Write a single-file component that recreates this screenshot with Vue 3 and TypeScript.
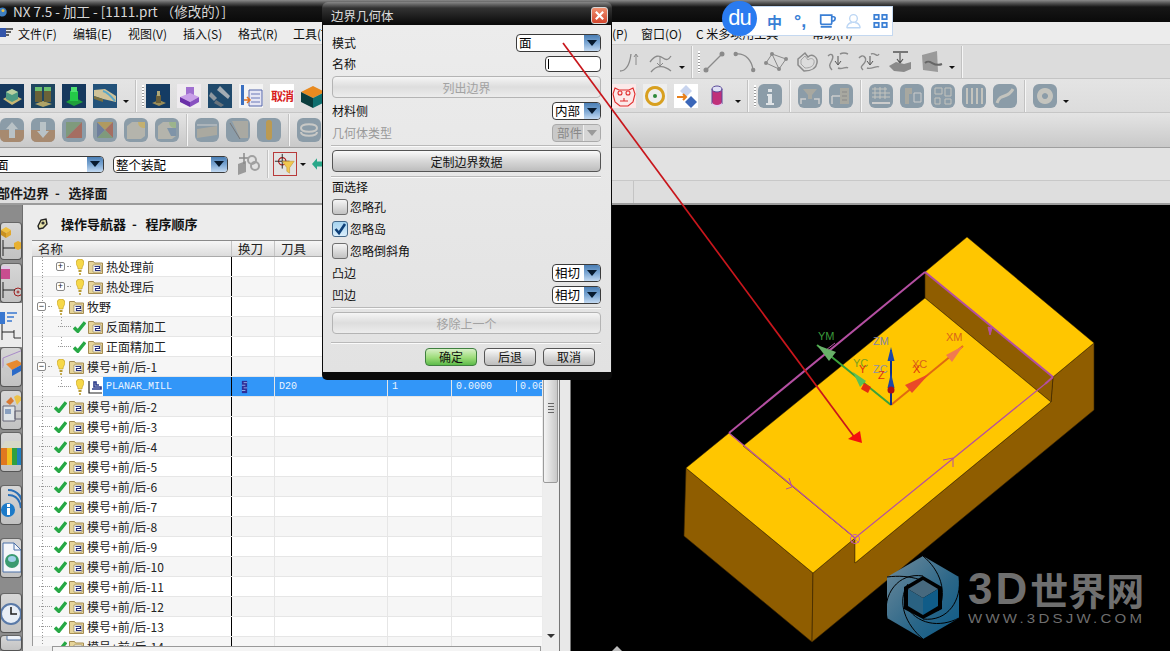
<template>
  <div class="app">
    <div class="title-bar">
      <svg class="orb" viewBox="0 0 12 16"><circle cx="3" cy="8" r="6" fill="#3f7fc0" /><circle cx="4" cy="6" r="2" fill="#e8c04a" /></svg>
      <span>NX 7.5 - 加工 - [1111.prt （修改的）]</span>
    </div>

    <div class="menu-bar">
      <svg class="menu-icon" viewBox="0 0 14 14"><path d="M0 2h6v9H0z" fill="#3355aa" /><path d="M6 3h7M6 6h5M6 9h3" stroke="#333" stroke-width="1.4" /></svg>
      <span v-for="m in menusLeft" :key="m" class="menu-item">{{ m }}</span>
      <span class="menu-rest">
        <span class="menu-tight">(P)</span>
        <span class="menu-item">窗口(O)</span>
        <span class="menu-long">C 米多项用工具</span>
        <span class="menu-item">帮助(H)</span>
      </span>
    </div>

    <div class="tb tb1">
      <div class="tb-group tb1-group">
        <template v-for="(it, i) in row1" :key="i">
          <span v-if="it === 'sep'" class="tb-sep" />
          <span v-else-if="it === 'grip'" class="tb-grip" />
          <span v-else-if="it === 'drop'" class="tb-drop" />
          <svg v-else class="tb-icon" viewBox="0 0 24 24">
            <rect v-if="icons[it].bg" width="24" height="24" :rx="icons[it].rx ?? 0" :fill="icons[it].bg" />
            <path v-for="(s, j) in icons[it].shapes" :key="j" :d="s.d" :fill="s.fill ?? 'none'" :stroke="s.stroke ?? 'none'" :stroke-width="s.w ?? 1" />
          </svg>
        </template>
      </div>
    </div>

    <div class="tb tb2">
      <template v-for="(it, i) in row2" :key="i">
        <span v-if="it === 'sep'" class="tb-sep" />
        <span v-else-if="it === 'grip'" class="tb-grip" />
        <span v-else-if="it === 'drop'" class="tb-drop" />
        <span v-else-if="it === 'jump'" class="tb-jump" />
        <span v-else-if="it === 'cancel'" class="tb-cancel">取消</span>
        <svg v-else class="tb-icon" viewBox="0 0 24 24">
          <rect v-if="icons[it].bg" width="24" height="24" :rx="icons[it].rx ?? 0" :fill="icons[it].bg" />
          <path v-for="(s, j) in icons[it].shapes" :key="j" :d="s.d" :fill="s.fill ?? 'none'" :stroke="s.stroke ?? 'none'" :stroke-width="s.w ?? 1" />
        </svg>
      </template>
    </div>

    <div class="tb tb3">
      <template v-for="(it, i) in row3" :key="i">
        <span v-if="it === 'sep'" class="tb-sep" />
        <svg v-else class="tb-icon" viewBox="0 0 24 24">
          <rect v-if="icons[it].bg" width="24" height="24" :rx="icons[it].rx ?? 0" :fill="icons[it].bg" />
          <path v-for="(s, j) in icons[it].shapes" :key="j" :d="s.d" :fill="s.fill ?? 'none'" :stroke="s.stroke ?? 'none'" :stroke-width="s.w ?? 1" />
        </svg>
      </template>
    </div>

    <div class="tb tb4">
      <div class="combo combo-face"><span class="combo-text">面</span><span class="combo-arrow"><i /></span></div>
      <div class="combo combo-scope"><span class="combo-text">整个装配</span><span class="combo-arrow"><i /></span></div>
      <svg class="assy-icon" viewBox="0 0 24 24">
        <path d="M2 12l8-3v11l-8 3z" fill="#9a9a9a" />
        <path d="M8 1v11M3 6h10" stroke="#8a8a8a" stroke-width="1.5" />
        <circle cx="16" cy="8" r="4" fill="none" stroke="#a0a0a0" stroke-width="2" />
        <circle cx="19" cy="14" r="4" fill="none" stroke="#a0a0a0" stroke-width="2" />
      </svg>
      <span class="tb-sep tb4-sep" />
      <div class="filter-btn">
        <svg viewBox="0 0 24 24">
          <circle cx="9" cy="9" r="4" fill="none" stroke="#b01818" stroke-width="1.2" />
          <path d="M9 1v16M1 9h16" stroke="#222" stroke-width="1" />
          <path d="M9 9h13l-5 7v6l-3-2v-4z" fill="#f0c850" stroke="#c09030" stroke-width=".6" />
        </svg>
      </div>
      <span class="tb-drop tb4-drop" />
      <svg class="green-arrow" viewBox="0 0 12 14"><path d="M0 7l6-7v4h6v6H6v4z" fill="#2aa88a" /></svg>
    </div>

    <div class="status-row">
      <span class="status-text">{{ statusText }}</span>
      <span class="status-tick" />
    </div>

    <div class="main">
      <div class="rail">
        <div v-for="(b, i) in rail" :key="i" :class="['rail-item', b.kind]" :style="{ height: b.h + 'px' }">
          <svg v-if="b.shapes" viewBox="0 0 22 38" class="rail-icon">
            <path v-for="(s, j) in b.shapes" :key="j" :d="s.d" :fill="s.fill ?? 'none'" :stroke="s.stroke ?? 'none'" :stroke-width="s.w ?? 1" />
          </svg>
        </div>
      </div>

      <div class="nav">
        <div class="nav-head">
          <svg class="nav-icon" viewBox="0 0 12 12"><path d="M2 8l3-6 5-1 1 5-4 4-4 1z" fill="#e8e2a8" stroke="#222" stroke-width="1.4" /><circle cx="7" cy="5" r="1.6" fill="#333" /></svg>
          <span class="nav-title">{{ navTitle }}</span>
        </div>
        <div class="grid-wrap">
          <div class="grid">
            <div class="grid-head">
              <span>名称</span><span>换刀</span><span>刀具</span><span /><span />
            </div>
            <div class="grid-body">
              <div v-for="(r, i) in rows" :key="i" :class="['grid-row', { odd: i % 2 === 1, selected: r.selected }]">
                <div :class="['name-cell', 'lv' + r.level, { sub: r.sub }]">
                  <span class="slot">
                    <span v-if="r.expand" class="expander">{{ r.expand }}</span>
                    <span class="dots" />
                  </span>
                  <span class="state">
                    <svg v-if="r.state === 'bulb'" class="bulb" viewBox="0 0 8 16"><path d="M4 0a4 4 0 0 1 4 4c0 2-2 3-2 6H2c0-3-2-4-2-6a4 4 0 0 1 4-4z" fill="#f6d84a" stroke="#c09a20" stroke-width=".6" /><path d="M2.5 11h3v2h-3zM3.2 14h1.6v2H3.2z" fill="#b89a30" /></svg>
                    <svg v-else class="check" viewBox="0 0 13 12"><path d="M1 6.5l3.8 3.8L12 1.2" fill="none" stroke="#27a845" stroke-width="3.4" /></svg>
                  </span>
                  <svg v-if="r.op" class="folder" viewBox="0 0 15 14"><path d="M1 1v12h13" fill="none" stroke="#222" stroke-width="1.2" /><path d="M4 9h9V7H6V2h2v3h3" fill="none" stroke="#2a3a8a" stroke-width="1.6" /></svg>
                  <svg v-else class="folder" viewBox="0 0 15 14">
                    <path d="M.5 1.5h5l1 1.5h8v10.5H.5z" fill="#e6d49a" stroke="#a58c52" />
                    <path d="M5 5h8v7H5z" fill="#fff" stroke="#8a7a50" stroke-width=".6" />
                    <path d="M6.5 6.5h5v2h-4v2h5" fill="none" stroke="#27307a" stroke-width="1.2" />
                  </svg>
                  <span :class="['name-text', { mono: r.selected }]">{{ r.name }}</span>
                </div>
                <div class="cell tool-change">
                  <svg v-if="r.selected" viewBox="0 0 8 14" class="tool-icon"><path d="M1 0h6v14H1z" fill="#2e2e98" /><path d="M3 2h4M1 5h4M3 8h4M1 11h4" stroke="#9ab8f0" /></svg>
                </div>
                <div class="cell">{{ r.selected ? 'D20' : '' }}</div>
                <div class="cell">{{ r.selected ? '1' : '' }}</div>
                <div class="cell last">
                  <span v-if="r.selected">0.0000</span><span v-if="r.selected" class="extra">0.000</span>
                </div>
              </div>
            </div>
          </div>
          <div class="vscroll">
            <div class="vthumb"><i /><i /><i /><i /></div>
            <span class="varrow" />
          </div>
        </div>
        <div class="hscroll"><span class="hthumb" /></div>
      </div>

      <div class="gutter" />

      <div class="graphics">
        <svg class="scene" viewBox="571 205 599 446">
          <path d="M686 468L813 573L812 642L684 536Z" fill="#8f5d00" stroke="#3a2500" stroke-width=".6" />
          <path d="M813 573L855 538V563L1051 402L1053 377L1094 343V410L812 642Z" fill="#8f5d00" stroke="#3a2500" stroke-width=".6" />
          <path d="M925 272L1053 377L1051 402L925 298Z" fill="#8f5d00" stroke="#3a2500" stroke-width=".6" />
          <path d="M686 468L729 433L855 538L813 573Z" fill="#ffc600" stroke="#3a2500" stroke-width=".5" />
          <path d="M743 446L925 298L1051 402L855 563V538Z" fill="#ffc600" stroke="#3a2500" stroke-width=".5" />
          <path d="M925 272L967 237L1094 343L1053 377Z" fill="#ffc600" stroke="#3a2500" stroke-width=".5" />

          <path d="M729 433L925 272" stroke="#b44fa2" stroke-width="2" />
          <path d="M925 272L1053 377" stroke="#b44fa2" stroke-width="2" />
          <path d="M1053 377L1045 384" stroke="#b44fa2" stroke-width="2" />
          <path d="M1045 384L855 538L729 433" fill="none" stroke="#b44fa2" stroke-width="1.2" />
          <circle cx="855" cy="539" r="4.5" fill="none" stroke="#c05ab0" />
          <path d="M851 535l8 8M859 535l-8 8" stroke="#c05ab0" stroke-width=".7" />
          <path d="M943 460L953 458L953 467" fill="none" stroke="#b44fa2" />
          <path d="M789 478L792 487L786 489" fill="none" stroke="#b44fa2" />
          <path d="M988 327l2 8 2-7z" fill="#b44fa2" stroke="#b44fa2" />
          <path d="M835 343L826 350L833 356" fill="none" stroke="#b44fa2" />

          <path d="M891 405L817 345" stroke="#3aa23a" stroke-width="2" />
          <path d="M817 345L836 352L829 361Z" fill="#68b068" />
          <path d="M853 372L866 381L860 387Z" fill="#58c058" />
          <path d="M891 405L963 346" stroke="#e06a10" stroke-width="2" />
          <path d="M963 346L952 362L946 355Z" fill="#f07a50" />
          <path d="M929 374L912 393L905 385Z" fill="#ea4a28" />
          <path d="M891 405V350" stroke="#10308a" stroke-width="2" />
          <path d="M891 347l-3.5 14h7z" fill="#1c48a8" />
          <path d="M891 373l-3.5 15h7z" fill="#1c48a8" />
          <circle cx="891" cy="390" r="3.5" fill="#b01010" />
          <path d="M864 383L871 387L868 393L861 389Z" fill="#e52a10" />
          <text x="818" y="340" class="axis" fill="#3b9a3b">YM</text>
          <text x="873" y="345" class="axis" fill="#7f84a8">ZM</text>
          <text x="946" y="341" class="axis" fill="#d8641c">XM</text>
          <text x="853" y="367" class="axis" fill="#7aa020">YC</text>
          <text x="873" y="373" class="axis" fill="#8f90a0">ZC</text>
          <text x="912" y="368" class="axis" fill="#d8641c">XC</text>
          <text x="859" y="373" class="axis" fill="#dd3010">Y</text>
          <text x="878" y="379" class="axis" fill="#dd3010">Z</text>
          <text x="913" y="373" class="axis" fill="#dd3010">X</text>

          <path d="M923 556L959 577V618L923 639L887 618V577Z" fill="url(#hexFill)" />
          <path d="M887 577C910 574 932 580 942 597M923 556C940 570 948 592 938 611M959 577C962 600 948 622 923 619M959 618C940 628 916 625 905 604M923 639C906 625 896 602 908 584M887 618C882 595 898 572 923 576" fill="none" stroke="#000" stroke-width="1" />
          <path d="M923 576L942 587V609L923 619L904 609V587Z" fill="#000" />
          <path d="M923 580L938 589L923 598L908 589Z" fill="#47697e" />
          <path d="M908 589L923 598V615L908 606Z" fill="#2a6282" />
          <path d="M938 589L923 598V615L938 606Z" fill="#105c88" />
          <path d="M612 651l5-5 5 5z" fill="#bbb" />
          <defs>
            <linearGradient id="hexFill" x1="0" y1="0" x2="1" y2="1">
              <stop offset="0" stop-color="#6f8b9c" />
              <stop offset=".6" stop-color="#2a6688" />
              <stop offset="1" stop-color="#0b5a88" />
            </linearGradient>
          </defs>
        </svg>
        <div class="mark">
          <div class="mark-big"><span class="mark-en">3D</span><span class="mark-cn">世界网</span></div>
          <div class="mark-url">WWW.3DSJW.COM</div>
        </div>
      </div>
    </div>

    <div class="dialog">
      <div class="dlg-title">
        <span>边界几何体</span>
        <button class="close"><svg viewBox="0 0 12 12"><path d="M2 2l8 8M10 2l-8 8" stroke="#fff" stroke-width="2.4" /></svg></button>
      </div>
      <div class="dlg-body">
        <div class="dlg-row">
          <label>模式</label>
          <div class="combo dlg-mode"><span class="combo-text">面</span><span class="combo-arrow"><i /></span></div>
        </div>
        <div class="dlg-row mt4 name-row">
          <label>名称</label>
          <div class="name-input"><i /></div>
        </div>
        <button class="btn btn-wide mt4" disabled>列出边界</button>
        <div class="dlg-row mt4">
          <label>材料侧</label>
          <div class="combo dlg-small"><span class="combo-text">内部</span><span class="combo-arrow"><i /></span></div>
        </div>
        <div class="dlg-row mt4 off">
          <label>几何体类型</label>
          <div class="combo dlg-small disabled"><span class="combo-text">部件</span><span class="combo-arrow"><i /></span></div>
        </div>
        <div class="dlg-sep mt3" />
        <button class="btn btn-wide mt3">定制边界数据</button>
        <div class="dlg-sep mt4" />
        <div class="dlg-row group-label"><label>面选择</label></div>
        <label v-for="(c, i) in checks" :key="c.text" :class="['chk', i === 0 ? 'mt3' : 'mt6']">
          <span :class="['box', { on: c.on }]">
            <svg v-if="c.on" viewBox="0 0 14 14"><path d="M2.5 7l3.5 4 6-9" fill="none" stroke="#0d3f78" stroke-width="2.6" /></svg>
          </span>
          <span>{{ c.text }}</span>
        </label>
        <div class="dlg-row mt5">
          <label>凸边</label>
          <div class="combo dlg-small"><span class="combo-text">相切</span><span class="combo-arrow"><i /></span></div>
        </div>
        <div class="dlg-row mt4">
          <label>凹边</label>
          <div class="combo dlg-small"><span class="combo-text">相切</span><span class="combo-arrow"><i /></span></div>
        </div>
        <div class="dlg-sep mt3" />
        <button class="btn btn-wide mt3" disabled>移除上一个</button>
        <div class="dlg-sep mt8" />
        <div class="dlg-foot">
          <button class="btn foot ok">确定</button>
          <button class="btn foot">后退</button>
          <button class="btn foot">取消</button>
        </div>
      </div>
    </div>

    <svg class="red-arrow" viewBox="0 0 1170 651">
      <path d="M563 43L855 438" stroke="#c8161c" stroke-width="1.7" />
      <path d="M862 443L848 439L860 431Z" fill="#f40f0f" />
    </svg>

    <div class="ime">
      <div class="ime-logo">du</div>
      <span class="ime-zh">中</span>
      <span class="ime-punct">°,</span>
      <svg class="ime-ic" viewBox="0 0 20 18"><path d="M2 2h13v9q0 2-2 2H4q-2 0-2-2zM15 4h2q2 0 2 2t-2 3h-2M2 16h13" fill="none" stroke="#3a7fd5" stroke-width="2" /></svg>
      <svg class="ime-ic" viewBox="0 0 20 18"><circle cx="10" cy="6" r="4.5" fill="none" stroke="#bcd6f4" stroke-width="1.6" /><path d="M2 17c1-5 4-6 6-6M18 17c-1-5-4-6-6-6M2 17h16" fill="none" stroke="#bcd6f4" stroke-width="1.6" /></svg>
      <svg class="ime-ic ime-grid" viewBox="0 0 18 18"><path d="M2 2h5v5H2zM11 2h5v5h-5zM2 11h5v5H2zM11 11h5v5h-5z" fill="none" stroke="#3a7fd5" stroke-width="2" /></svg>
    </div>
  </div>
</template>

<script setup lang="ts">
interface Shape {
  d: string
  fill?: string
  stroke?: string
  w?: number
}
interface Icon {
  bg?: string
  rx?: number
  shapes: Shape[]
}
interface Row {
  name: string
  level: 0 | 1
  state: 'bulb' | 'check'
  expand?: string
  op?: boolean
  sub?: boolean
  selected?: boolean
}

const menusLeft = ['文件(F)', '编辑(E)', '视图(V)', '插入(S)', '格式(R)', '工具(T)']
const statusText = '部件边界  -   选择面'
const navTitle = '操作导航器  -   程序顺序'

const line = '#8a8a8a'
const dark = '#16395e'
const grey = '#8b9ca8'

const icons: Record<string, Icon> = {
  // drawing tools, first row
  curveA: { shapes: [{ d: 'M2 21C10 21 12 12 13 4', stroke: line, w: 1.3 }, { d: 'M18 5v10M16 7l2-3 2 3', stroke: line }] },
  curveB: { shapes: [{ d: 'M1 12C6 5 10 5 14 8s6 1 8-2M2 22C8 14 16 16 22 21', stroke: line, w: 1.3 }, { d: 'M11 7v8M8 13l3 3 3-3', stroke: line }] },
  lineT: { shapes: [{ d: 'M4 20L20 4', stroke: line, w: 1.3 }, { d: 'M1.5 20a2.5 2.5 0 1 0 5 0a2.5 2.5 0 1 0-5 0M17.5 4a2.5 2.5 0 1 0 5 0a2.5 2.5 0 1 0-5 0', fill: line }] },
  arcT: { shapes: [{ d: 'M3 4C13 3 19 11 20 20', stroke: line, w: 1.3 }, { d: 'M.5 4a2.2 2.2 0 1 0 4.4 0a2.2 2.2 0 1 0-4.4 0M18 20a2.2 2.2 0 1 0 4.4 0a2.2 2.2 0 1 0-4.4 0', fill: line }] },
  splineT: { shapes: [{ d: 'M2 13L8 4L15 19L22 9M2 13L15 19M8 4L22 9', stroke: line }, { d: 'M0 13a2 2 0 1 0 4 0a2 2 0 1 0-4 0M6 4a2 2 0 1 0 4 0a2 2 0 1 0-4 0M13 19a2 2 0 1 0 4 0a2 2 0 1 0-4 0M20 9a2 2 0 1 0 4 0a2 2 0 1 0-4 0', fill: line }] },
  loopT: { shapes: [{ d: 'M3 9L10 3L13 7C17 3 23 7 22 13C21 19 15 21 9 21L3 15Z', stroke: line, w: 1.5 }, { d: 'M6 10L10 6L13 10C16 7 20 9 19 13C18 17 14 18 10 18L6 14Z', stroke: '#a5a5a5' }] },
  projA: { shapes: [{ d: 'M2 6C6 2 8 6 6 10S2 16 6 20M14 4C18 2 20 3 22 4M12 18C16 20 20 16 22 18', stroke: line, w: 1.4 }, { d: 'M12 6v8M9 11l3 4 3-4', stroke: '#555' }] },
  projB: { shapes: [{ d: 'M2 8C6 3 10 8 8 12S2 16 6 20M14 4C18 2 20 8 22 4M10 18C14 20 20 15 22 17', stroke: line, w: 1.4 }, { d: 'M13 6v8M10 11l3 4 3-4', stroke: '#555' }] },
  surfA: { shapes: [{ d: 'M5 2H20', stroke: '#555', w: 1.5 }, { d: 'M12 3v9M9 9l3 4 3-4', stroke: '#555', w: 1.2 }, { d: 'M1 16L8 12L16 14L23 12V19L16 22L6 21Z', fill: '#8a8a8a' }] },
  surfB: { shapes: [{ d: 'M3 5L18 1L19 22L4 20Z', fill: '#9a9a9a' }, { d: 'M6 13C12 8 14 18 23 14', stroke: '#666', w: 2 }] },
  // part icons, second row
  op1: { bg: dark, shapes: [{ d: 'M3 15L12 10L22 15L12 21Z', fill: '#c7b673' }, { d: 'M6 8L12 5L18 8V15L12 18L6 15Z', fill: '#4d9a82' }, { d: 'M6 8L12 5L18 8L12 11Z', fill: '#b9d0a0' }] },
  op2: { bg: '#1f4560', shapes: [{ d: 'M4 20L12 17L21 20L12 23Z', fill: '#b0a468' }, { d: 'M4 5h7v13H4z', fill: '#6a6238' }, { d: 'M13 5h7v13h-7z', fill: '#6a6238' }, { d: 'M4 3h7v4H4zM13 3h7v4h-7z', fill: '#6cc070' }] },
  op3: { bg: dark, shapes: [{ d: 'M4 18L12 13L21 18L12 22Z', fill: '#1fa03a' }, { d: 'M8 7h8v10H8z', fill: '#24c848' }, { d: 'M9 3h6v5H9z', fill: '#50e070' }] },
  op4: { bg: '#23527a', shapes: [{ d: 'M1 6L12 5L23 12V18L10 15L1 12Z', fill: '#cfc39a' }, { d: 'M10 7C14 8 18 12 22 17', stroke: '#5aa8c8', w: 2 }, { d: 'M1 12L10 15V18L1 15Z', fill: '#7a7040' }] },
  op5: { bg: '#153c64', shapes: [{ d: 'M6 19L13 16L20 19L13 22Z', fill: '#9a8c58' }, { d: 'M10 11h5v8h-5z', fill: '#6a5f3a' }, { d: 'M11 7h3v5h-3z', fill: '#b0a878' }] },
  op6: { bg: '#efecef', shapes: [{ d: 'M9 3h8v9H9z', fill: '#a070d0' }, { d: 'M3 13L13 9L22 13L13 18Z', fill: '#c9a0e8' }, { d: 'M3 13L13 18V23L3 18Z', fill: '#6a2fa8' }, { d: 'M22 13L13 18V23L22 18Z', fill: '#8850c0' }] },
  op7: { bg: '#204a6c', shapes: [{ d: 'M3 8L9 14L6 17L1 12Z', fill: '#8f98a0' }, { d: 'M12 2L22 12L20 15L9 6Z', fill: '#a4adb4' }, { d: 'M8 16L16 21L13 23L6 19Z', fill: '#6a747c' }] },
  op8: { bg: '#f3f3f3', shapes: [{ d: 'M2 1h3v20H2z', fill: '#3a6fc0' }, { d: 'M10 6h13v16H10z', fill: '#e6e6f4', stroke: '#5566aa' }, { d: 'M12 10h9M12 14h9M12 18h9', stroke: '#6a78b8' }, { d: 'M5 16h6M8 13l3 3-3 3', stroke: '#e07020', w: 1.5 }] },
  cube: { shapes: [{ d: 'M12 2L24 8L12 14L0 8Z', fill: '#e88a20' }, { d: 'M0 8L12 14V24L0 18Z', fill: '#0b3d3d' }, { d: 'M24 8L12 14V24L24 18Z', fill: '#107070' }] },
  cat: { bg: '#fbe9e9', shapes: [{ d: 'M3 4l4 2h10l4-2 2 6-2 8-5 4H8l-5-4-2-8z', stroke: '#e02c2c', w: 1.1 }, { d: 'M6 9a2 2 0 1 0 4 0a2 2 0 1 0-4 0M14 9a2 2 0 1 0 4 0a2 2 0 1 0-4 0M8 17h8M12 14v3', stroke: '#e02c2c', w: 1.1 }] },
  ring: { bg: '#eeeeee', shapes: [{ d: 'M12 2a10 10 0 1 0 .01 0zM12 5a7 7 0 1 1-.01 0z', fill: '#d8a020' }, { d: 'M10 12a2 2 0 1 0 4 0a2 2 0 1 0-4 0', fill: '#2e8a3a' }] },
  flip: { bg: '#ffffff', shapes: [{ d: 'M12 1L18 7L12 13L6 7Z', fill: '#c8d4ee' }, { d: 'M17 12L23 18L17 24L11 18Z', fill: '#3a66b8' }, { d: 'M3 13h9M9 10l3 3-3 3', stroke: '#e8801a', w: 2 }] },
  cyl: { shapes: [{ d: 'M7 6h10v13a5 3 0 0 1-10 0z', fill: '#c0307a' }, { d: 'M7 5a5 3 0 0 1 10 0a5 3 0 0 1-10 0', fill: '#e0e0f4', stroke: '#5a4a9a' }, { d: 'M7 5v15M17 5v15', stroke: '#5a4a9a' }, { d: 'M7 18a5 3 0 0 0 10 0v2a5 3 0 0 1-10 0z', fill: '#e0d0f0' }] },
  // greyed-out icons
  gUp: { bg: grey, rx: 6, shapes: [{ d: 'M0 12H24V18Q24 24 18 24H6Q0 24 0 18Z', fill: '#a78a70' }, { d: 'M12 4L18 11H15V20H9V11H6Z', fill: '#b9c2c6' }] },
  gDown: { bg: grey, rx: 6, shapes: [{ d: 'M0 12H24V18Q24 24 18 24H6Q0 24 0 18Z', fill: '#a78a70' }, { d: 'M12 20L18 13H15V4H9V13H6Z', fill: '#b9c2c6' }] },
  gTri: { bg: grey, rx: 6, shapes: [{ d: 'M4 4H20L4 20Z', fill: '#7f9a7c' }, { d: 'M20 4V20H4Z', fill: '#a56e62' }] },
  gQuad: { bg: grey, rx: 6, shapes: [{ d: 'M4 4L12 12L4 20Z', fill: '#6f7f9c' }, { d: 'M4 4H20L12 12Z', fill: '#b09a60' }, { d: 'M20 4V20L12 12Z', fill: '#a56e62' }, { d: 'M4 20H20L12 12Z', fill: '#7f9a7c' }] },
  gBox: { bg: grey, rx: 6, shapes: [{ d: 'M3 8L8 4H21V18L17 21H3Z', fill: '#b4b4ac' }, { d: 'M14 4a6 6 0 0 0 7 6V4Z', fill: '#c4b070' }] },
  gBox2: { bg: grey, rx: 6, shapes: [{ d: 'M3 8L8 4H21V18L17 21H3Z', fill: '#b4b4ac' }, { d: 'M14 4a6 6 0 0 0 7 6V4Z', fill: '#9cb48c' }, { d: 'M12 10h9v8h-5z', fill: '#7f94a8' }] },
  gSlab: { bg: grey, rx: 6, shapes: [{ d: 'M2 11L22 8V17L2 20Z', fill: '#aaa9a0' }, { d: 'M2 7H22', stroke: '#ccc' }] },
  gSlant: { bg: grey, rx: 6, shapes: [{ d: 'M6 3H22V20H14Z', fill: '#a9a9a2' }, { d: 'M4 5L14 21', stroke: '#777' }] },
  gPill: { bg: grey, rx: 6, shapes: [{ d: 'M9 5a3 3 0 0 1 6 0V19a3 3 0 0 1-6 0Z', fill: '#bb9a52' }] },
  gSwirl: { bg: grey, rx: 6, shapes: [{ d: 'M4 10C4 5 20 5 20 10S4 15 4 10ZM4 14C4 19 20 19 20 14', stroke: '#c9c9c6', w: 2 }] },
  gInfo: { bg: grey, rx: 6, shapes: [{ d: 'M10 5h4v3h-4zM9 10h5v9h2v2H8v-2h2v-7H9z', fill: '#dfe3e6' }] },
  gTable: { bg: grey, rx: 6, shapes: [{ d: 'M5 5H19L14 11V15H10V11Z', fill: '#a8a8a0' }, { d: 'M3 20V15H8M21 20V15H16', stroke: '#ccc', w: 1.5 }] },
  gList: { bg: grey, rx: 6, shapes: [{ d: 'M11 4H20V20H11Z', fill: '#a8a8a0' }, { d: 'M3 12H11M3 20V12', stroke: '#ccc', w: 1.5 }, { d: 'M13 8H18M13 12H18M13 16H18', stroke: '#888' }] },
  gGrid: { bg: grey, rx: 6, shapes: [{ d: 'M3 5H18M3 9H21M3 13H21M6 3V15M11 3V15M16 3V15', stroke: '#c4c4be' }, { d: 'M3 19H21', stroke: '#ccc', w: 2 }] },
  gTool: { bg: grey, rx: 6, shapes: [{ d: 'M5 4H12V10H9V20H5Z', fill: '#a8a8a0' }, { d: 'M14 9H21V18H14Z', stroke: '#ccc' }] },
  gDots: { bg: grey, rx: 6, shapes: [{ d: 'M4 4H11V10H4ZM14 4H20V12H14ZM4 14H9V20H4ZM14 15H20V20H14Z', stroke: '#c4c4be' }] },
  gBars: { bg: grey, rx: 6, shapes: [{ d: 'M5 4V20M10 4V20M15 4V20M20 4V20', stroke: '#c4c4be', w: 2 }] },
  gCurve: { bg: grey, rx: 6, shapes: [{ d: 'M4 19C8 8 14 16 20 5', stroke: '#c4c4be', w: 3 }] },
  gGear: { bg: grey, rx: 6, shapes: [{ d: 'M12 4a8 8 0 1 0 .01 0zM12 9a3 3 0 1 1-.01 0z', fill: '#c4c4be' }] },
}

const row1 = ['curveA', 'curveB', 'drop', 'sep', 'grip', 'lineT', 'arcT', 'splineT', 'loopT', 'projA', 'projB', 'surfA', 'surfB', 'drop', 'sep']
const row2 = [
  'op1', 'op2', 'op3', 'op4', 'drop', 'sep', 'grip',
  'op5', 'op6', 'op7', 'op8', 'cancel', 'cube', 'jump',
  'cat', 'ring', 'flip', 'cyl', 'drop', 'sep', 'grip',
  'gInfo', 'sep', 'gTable', 'gList', 'sep',
  'gGrid', 'gTool', 'gDots', 'gBars', 'gCurve', 'sep', 'gGear', 'drop',
]
const row3 = ['gUp', 'gDown', 'gTri', 'gQuad', 'gBox', 'gBox2', 'sep', 'gSlab', 'gSlant', 'gPill', 'sep', 'gSwirl']

const p = (d: string, fill?: string, stroke?: string, w?: number): Shape => ({ d, fill, stroke, w })
const tree = (x: number, y: number): Shape[] => [p(`M${x} ${y - 8}V${y + 8}M${x} ${y}H${x + 12}`, undefined, '#222', 1)]

const rail = [
  { h: 15, kind: 'dark' },
  { h: 38, kind: 'btn', shapes: [p('M0 8L5 5L10 8L5 11Z', '#f0c040'), p('M0 8L5 11V16L0 13Z', '#c89020'), p('M10 8L5 11V16L10 13Z', '#e0a830'), p('M13 21L17 19L21 21V26L17 28L13 26Z', '#e8b030'), ...tree(2, 26)] },
  { h: 3, kind: 'dark' },
  { h: 40, kind: 'btn', shapes: [p('M0 4H9V15H0Z', '#c84d8f'), p('M0 3a5 2 0 0 1 9 0v2H0Z', '#e0c8e8'), p('M13 28a4 4 0 1 0 8 0a4 4 0 1 0-8 0M16 28a1 1 0 1 0 2 0a1 1 0 1 0-2 0', undefined, '#a02020'), ...tree(2, 26)] },
  { h: 44, kind: 'active', shapes: [p('M0 6H5V18H0Z', '#3a78d0'), p('M7 7H17M7 11H14M7 15H12', undefined, '#3a78d0', 1.4), p('M14 24V32H21', undefined, '#333'), ...tree(2, 26)] },
  { h: 40, kind: 'btn', shapes: [p('M2 10L22 2V14L8 24L2 20Z', undefined, '#a88ac8'), p('M5 16L16 12L22 16L11 22Z', '#e88a30'), p('M11 22L22 16V22L11 28Z', '#2a6ac8'), p('M2 18L11 22V28L2 23Z', '#c8c8c8')] },
  { h: 3, kind: 'dark' },
  { h: 40, kind: 'btn', shapes: [p('M2 15H14V30H2Z', '#dfe4e8', '#667'), p('M14 20H21V28H14Z', undefined, '#667'), p('M4 18H10V23H4Z', '#89a0c0'), p('M13 6C16 3 19 4 21 8L16 14Z', '#ecc24a'), p('M5 11L10 6L13 10L9 14Z', '#d87830')] },
  { h: 2, kind: 'dark' },
  { h: 40, kind: 'btn', shapes: [p('M0 15H6V32H0Z', '#e07820'), p('M6 15H11V32H6Z', '#f0c020'), p('M11 15H16V32H11Z', '#30a040'), p('M16 15H22V32H16Z', '#2080c0'), p('M0 15L4 8H10L6 15ZM6 15L10 8H15L11 15ZM11 15L15 8H20L16 15ZM16 15L20 8H22V15Z', '#d8d8c8')] },
  { h: 13, kind: 'dark' },
  { h: 40, kind: 'btn', shapes: [p('M0 24a7 7 0 1 0 14 0a7 7 0 1 0-14 0', '#1c7ac8'), p('M6 18h3v3H6zM6 22h3v7H6z', '#fff'), p('M7 9C15 9 19 14 20 22M7 4C17 4 22 12 22 22', undefined, '#2a70b8', 2.2)] },
  { h: 13, kind: 'dark' },
  { h: 40, kind: 'btn', shapes: [p('M2 4H13L20 11V33H2Z', '#f4f6fa', '#4a70a8'), p('M13 4V11H20', undefined, '#4a70a8'), p('M4 22a7 7 0 1 0 14 0a7 7 0 1 0-14 0', '#3a9a70'), p('M7 20a4 3 0 0 1 8 0a4 3 0 0 1-8 0', '#a0d0e8')] },
  { h: 15, kind: 'dark' },
  { h: 40, kind: 'btn', shapes: [p('M0 20a10 10 0 1 0 20 0a10 10 0 1 0-20 0', '#e8eef6', '#5a7aa8', 2), p('M10 13V20H16', undefined, '#222', 1.6)] },
  { h: 2, kind: 'dark' },
  { h: 16, kind: 'btn', shapes: [p('M6 2H20V16H6Z', '#eef2f8', '#5a7aa8'), p('M10 5h4v4h-4z', '#2a60b0')] },
]

const rows: Row[] = [
  { name: '热处理前', level: 1, state: 'bulb', expand: '+' },
  { name: '热处理后', level: 1, state: 'bulb', expand: '+' },
  { name: '牧野', level: 0, state: 'bulb', expand: '−' },
  { name: '反面精加工', level: 1, state: 'check', sub: true },
  { name: '正面精加工', level: 1, state: 'check', sub: true },
  { name: '模号+前/后-1', level: 0, state: 'bulb', expand: '−' },
  { name: 'PLANAR_MILL', level: 1, state: 'bulb', op: true, selected: true, sub: true },
  ...Array.from({ length: 13 }, (_, i): Row => ({ name: `模号+前/后-${i + 2}`, level: 0, state: 'check' })),
]

const checks = [
  { text: '忽略孔', on: false },
  { text: '忽略岛', on: true },
  { text: '忽略倒斜角', on: false },
]
</script>

<style scoped>
.app {
  position: relative;
  width: 1170px;
  height: 651px;
  overflow: hidden;
  display: flex;
  flex-direction: column;
  background: #e6e6e6;
  font-family: "Noto Sans CJK SC", "Liberation Sans", sans-serif;
  font-size: 12px;
  color: #111;
}

/* title + menu */
.title-bar {
  height: 22px;
  flex: none;
  display: flex;
  align-items: center;
  padding-top: 2px;
  box-sizing: border-box;
  background: linear-gradient(#8a8a8a 0, #555 3px, #161616 7px, #0a0a0a 100%);
  color: #d8d8d8;
  font-size: 13.5px;
  line-height: 1;
  white-space: nowrap;
}
.orb {
  width: 9px;
  height: 14px;
  margin-right: 4px;
  flex: none;
}
.menu-bar {
  height: 23px;
  flex: none;
  display: flex;
  align-items: center;
  background: #ececec;
  border-bottom: 1px solid #cdcdcd;
  box-sizing: border-box;
  white-space: nowrap;
}
.menu-icon {
  width: 14px;
  height: 14px;
  margin-right: 4px;
  flex: none;
}
.menu-item {
  width: 55px;
  flex: none;
}
.menu-rest {
  display: flex;
  margin-left: -11px;
  padding-left: 275px;
}
.menu-tight {
  width: 29px;
}
.menu-long {
  width: 116px;
}

/* toolbars */
.tb {
  flex: none;
  display: flex;
  align-items: center;
  box-sizing: border-box;
  white-space: nowrap;
}
.tb1 {
  height: 34px;
  background: #dcdcdc;
  border-bottom: 1px solid #c4c4c4;
}
.tb1-group {
  display: flex;
  align-items: center;
  margin-left: 618px;
}
.tb-group {
  gap: 7px;
}
.tb2 {
  height: 34px;
  gap: 7px;
  background: linear-gradient(#e4e4e4, #dcdcdc);
  border-bottom: 1px solid #c6c6c6;
}
.tb3 {
  height: 35px;
  gap: 7px;
  background: linear-gradient(#e4e4e4, #c9c9c9);
  border-bottom: 1px solid #9f9f9f;
}
.tb4 {
  height: 33px;
  background: #e2e2e2;
  border-bottom: 1px solid #c8c8c8;
}
.tb-icon {
  width: 24px;
  height: 24px;
  flex: none;
}
.tb-sep {
  width: 2px;
  height: 32px;
  flex: none;
  background: #f6f6f6;
  border-left: 1px solid #c2c2c2;
  box-sizing: border-box;
}
.tb-grip {
  width: 2px;
  height: 22px;
  flex: none;
  margin: 0 -5px 0 -2px;
  background: repeating-linear-gradient(to bottom, #fff 0 2px, #9a9a9a 2px 3px);
}
.tb-drop {
  width: 0;
  height: 0;
  flex: none;
  align-self: flex-end;
  margin: 0 -1px 9px -1px;
  border-left: 3px solid transparent;
  border-right: 3px solid transparent;
  border-top: 3px solid #111;
}
.tb-jump {
  width: 273px;
  flex: none;
}
.tb-cancel {
  width: 24px;
  height: 24px;
  flex: none;
  background: #fff;
  color: #d81e1e;
  font-size: 12px;
  font-weight: 700;
  line-height: 24px;
  letter-spacing: -1px;
  overflow: hidden;
  text-align: center;
}

/* combos */
.combo {
  display: flex;
  align-items: stretch;
  height: 18px;
  box-sizing: border-box;
  border: 1px solid #3b3b3b;
  border-radius: 4px;
  background: #fff;
  overflow: hidden;
  flex: none;
}
.combo-text {
  flex: 1;
  padding-left: 2px;
  font-size: 12.5px;
  line-height: 16px;
  color: #000;
  white-space: nowrap;
}
.combo-arrow {
  width: 16px;
  flex: none;
  display: flex;
  align-items: center;
  justify-content: center;
  background: linear-gradient(#4b7fb5, #7ba6d2 50%, #c3daf2);
}
.combo-arrow i {
  width: 0;
  height: 0;
  border-left: 5px solid transparent;
  border-right: 5px solid transparent;
  border-top: 6px solid #071a2e;
}
.combo-face {
  width: 124px;
  margin-left: -20px;
  height: 17px;
}
.combo-face .combo-text {
  padding-left: 15px;
}
.combo-scope {
  width: 115px;
  margin-left: 9px;
  height: 17px;
}
.combo.disabled {
  background: #c9c9c9;
  border-color: #aaa;
}
.combo.disabled .combo-text {
  color: #888;
  padding-left: 4px;
}
.combo.disabled .combo-arrow {
  background: #d6d6d6;
  border-left: 1px solid #f0f0f0;
}
.combo.disabled .combo-arrow i {
  border-top-color: #9a9a9a;
}
.assy-icon {
  width: 24px;
  height: 24px;
  margin-left: 8px;
  flex: none;
}
.tb4-sep {
  margin-left: 7px;
  height: 28px;
}
.filter-btn {
  width: 24px;
  height: 24px;
  margin-left: 4px;
  border: 1px solid #b83a3a;
  box-sizing: border-box;
  flex: none;
}
.filter-btn svg {
  display: block;
  width: 22px;
  height: 22px;
}
.tb4-drop {
  align-self: center;
  margin: 0 0 0 3px;
}
.green-arrow {
  width: 10px;
  height: 12px;
  margin-left: 6px;
}
.status-row {
  height: 24px;
  flex: none;
  display: flex;
  align-items: center;
  background: #dedede;
  border-bottom: 2px solid #9c9c9c;
  box-sizing: border-box;
  position: relative;
}
.status-text {
  margin-left: -3px;
  font-size: 13px;
  font-weight: 700;
  color: #1a1a1a;
  white-space: pre;
}
.status-tick {
  position: absolute;
  left: 633px;
  top: 0;
  bottom: 0;
  width: 1px;
  background: #c4c4c4;
}

/* main area */
.main {
  flex: 1;
  min-height: 0;
  display: flex;
}
.rail {
  width: 23px;
  flex: none;
  padding-top: 2px;
  background: #8a8a8a;
  border-right: 1px solid #6e6e6e;
  box-sizing: border-box;
  overflow: hidden;
}
.rail-item {
  display: flex;
  align-items: center;
  overflow: hidden;
}
.rail-item.dark {
  background: #8c8c8c;
}
.rail-item.btn {
  background: linear-gradient(#d6d6d6, #c2c2c2);
  border-top: 1px solid #666;
  box-sizing: border-box;
}
.rail-item.active {
  background: #ececec;
}
.rail-icon {
  width: 22px;
  height: 38px;
  flex: none;
}
.nav {
  width: 537px;
  flex: none;
  display: flex;
  flex-direction: column;
  background: #ececec;
  border-right: 1px solid #777;
  box-sizing: border-box;
  padding-left: 9px;
}
.nav-head {
  height: 35px;
  flex: none;
  display: flex;
  align-items: center;
  padding-top: 2px;
  box-sizing: border-box;
  font-size: 13px;
  font-weight: 700;
}
.nav-title {
  white-space: pre;
}
.nav-icon {
  width: 12px;
  height: 12px;
  margin: 0 13px 0 4px;
}
.grid-wrap {
  flex: 1;
  min-height: 0;
  display: flex;
  overflow: hidden;
}
.grid {
  width: 510px;
  flex: none;
  display: flex;
  flex-direction: column;
  background: #fff;
  border-left: 1px solid #999;
  box-sizing: border-box;
}
.grid-head {
  height: 17px;
  flex: none;
  display: grid;
  grid-template-columns: 200px 43px 113px 64px 1fr;
  background: linear-gradient(#f6f6f6, #dcdcdc);
  border-top: 1px solid #8a8a8a;
  border-bottom: 1px solid #aaa;
  box-sizing: border-box;
  font-size: 12.5px;
  line-height: 15px;
  margin-left: -1px;
  color: #222;
}
.grid-head span {
  padding-left: 6px;
  border-right: 1px solid #c4c4c4;
}
.grid-body {
  flex: 1;
  min-height: 0;
  overflow: hidden;
}
.grid-row {
  height: 20px;
  display: grid;
  grid-template-columns: 200px 43px 113px 64px 1fr;
  margin-left: -1px;
  border-bottom: 1px solid #e6e6e6;
  box-sizing: border-box;
  background: #fff;
}
.grid-row.odd {
  background: #f6f6f6;
}
.name-cell {
  display: flex;
  align-items: center;
  border-right: 1px solid #000;
  white-space: nowrap;
  background: repeating-linear-gradient(to bottom, #9a9a9a 0 1px, transparent 1px 3px) 10px 0 / 1px 100% no-repeat;
}
.name-cell.sub {
  background:
    repeating-linear-gradient(to bottom, #9a9a9a 0 1px, transparent 1px 3px) 10px 0 / 1px 100% no-repeat,
    repeating-linear-gradient(to bottom, #9a9a9a 0 1px, transparent 1px 3px) 29px 0 / 1px 50% no-repeat;
}
.lv0 {
  padding-left: 5px;
}
.lv1 {
  padding-left: 24px;
}
.slot {
  width: 17px;
  height: 100%;
  flex: none;
  display: flex;
  align-items: center;
}
.expander {
  width: 9px;
  height: 9px;
  flex: none;
  box-sizing: border-box;
  border: 1px solid #888;
  border-radius: 2px;
  background: #fff;
  color: #222;
  font-size: 9px;
  line-height: 7px;
  text-align: center;
  font-family: "Liberation Sans", sans-serif;
}
.dots {
  flex: 1;
  margin: 0 2px;
  border-top: 1px dotted #999;
}
.state {
  width: 13px;
  flex: none;
  display: flex;
  justify-content: center;
}
.bulb {
  width: 8px;
  height: 16px;
}
.check {
  width: 13px;
  height: 12px;
}
.folder {
  width: 15px;
  height: 14px;
  margin-left: 2px;
  margin-right: 3px;
  flex: none;
}
.name-text {
  font-size: 12px;
  line-height: 19px;
  color: #222;
}
.name-text.mono {
  flex: 1;
  margin-left: -3px;
  padding-left: 3px;
  height: 100%;
  background: #3296f8;
  color: #eaf4ff;
  font-family: "Liberation Mono", monospace;
  font-size: 10px;
}
.cell {
  border-right: 1px solid #e6e6e6;
  padding-left: 4px;
  font-family: "Liberation Mono", monospace;
  font-size: 10px;
  line-height: 19px;
  color: #eaf4ff;
  overflow: hidden;
  white-space: nowrap;
}
.cell.last {
  border-right: 0;
}
.extra {
  margin-left: 24px;
  padding-left: 3px;
  border-left: 1px solid #cfe2f8;
}
.selected .name-cell {
  border-right-color: #000;
}
.selected .cell {
  background: #3296f8;
}
.tool-change {
  padding-left: 9px;
  display: flex;
  align-items: center;
}
.tool-icon {
  width: 7px;
  height: 14px;
}
.vscroll {
  width: 15px;
  margin-left: 1px;
  flex: none;
  position: relative;
  background: #eeeeee;
  padding-top: 17px;
  box-sizing: border-box;
}
.vthumb {
  height: 226px;
  display: flex;
  flex-direction: column;
  gap: 2px;
  align-items: center;
  padding-top: 145px;
  box-sizing: border-box;
  background: linear-gradient(to right, #f4f4f4, #c8c8c8);
  border: 1px solid #9a9a9a;
  border-radius: 0 0 2px 2px;
}
.vthumb i {
  width: 6px;
  height: 1px;
  flex: none;
  background: #666;
}
.varrow {
  position: absolute;
  left: 4px;
  bottom: 8px;
  border-left: 4px solid transparent;
  border-right: 4px solid transparent;
  border-top: 4px solid #333;
}
.hscroll {
  height: 5px;
  flex: none;
  background: #eeeeee;
  display: flex;
  padding-left: 20px;
}
.hthumb {
  width: 489px;
  border: 1px solid #999;
  border-bottom: 0;
  background: #f4f4f4;
  box-sizing: border-box;
}
.gutter {
  width: 11px;
  flex: none;
  background: #e8e8e8;
  border-right: 1px solid #777;
  box-sizing: border-box;
}
.graphics {
  flex: 1;
  min-width: 0;
  position: relative;
  background: #000;
}
.scene {
  display: block;
  width: 599px;
  height: 446px;
}
.axis {
  font-family: "Liberation Sans", sans-serif;
  font-size: 11px;
}
.mark {
  position: absolute;
  left: 397px;
  top: 362px;
  color: #6f6f6f;
}
.mark-big {
  display: flex;
  align-items: center;
  height: 44px;
  white-space: nowrap;
}
.mark-en {
  font-family: "Liberation Sans", sans-serif;
  font-size: 44px;
  font-weight: 700;
  line-height: 44px;
  letter-spacing: 3px;
}
.mark-cn {
  font-family: "Noto Sans CJK SC", sans-serif;
  font-size: 38px;
  font-weight: 700;
  line-height: 44px;
}
.mark-url {
  margin-top: 1px;
  font-family: "Liberation Sans", sans-serif;
  font-size: 12px;
  letter-spacing: 2.6px;
  line-height: 14px;
  white-space: nowrap;
  transform: scaleX(1.25);
  transform-origin: left center;
}

/* dialog */
.dialog {
  position: absolute;
  left: 322px;
  top: 2px;
  width: 290px;
  height: 378px;
  padding: 0 1px 8px;
  box-sizing: border-box;
  display: flex;
  flex-direction: column;
  background: linear-gradient(#888 0, #333 6px, #0b0b0b 22px);
  border-radius: 6px 6px 5px 5px;
}
.dlg-title {
  height: 23px;
  flex: none;
  display: flex;
  align-items: center;
  justify-content: space-between;
  padding: 3px 3px 0 8px;
  box-sizing: border-box;
  color: #ddd;
  font-size: 12.5px;
}
.close {
  width: 17px;
  height: 17px;
  padding: 2px;
  display: flex;
  border: 1px solid #d8d8d8;
  border-radius: 3px;
  background: linear-gradient(#f09070, #d2452c);
}
.close svg {
  width: 11px;
  height: 11px;
}
.dlg-body {
  flex: 1;
  min-height: 0;
  padding: 9px 10px 0 9px;
  background: linear-gradient(#ececec, #e2e2e2);
  display: flex;
  flex-direction: column;
}
.dlg-row {
  height: 18px;
  flex: none;
  display: flex;
  align-items: center;
  justify-content: space-between;
  line-height: 18px;
  color: #111;
}
.dlg-row.off label {
  color: #999;
}
.name-row {
  height: 16px;
}
.mt3 {
  margin-top: 3px;
}
.mt4 {
  margin-top: 4px;
}
.mt5 {
  margin-top: 5px;
}
.mt6 {
  margin-top: 6px;
}
.mt8 {
  margin-top: 8px;
}
.dlg-mode {
  width: 85px;
}
.dlg-small {
  width: 49px;
}
.name-input {
  width: 56px;
  height: 16px;
  padding: 2px 0 0 2px;
  box-sizing: border-box;
  border: 1px solid #3b3b3b;
  border-radius: 4px;
  background: #fff;
}
.name-input i {
  display: block;
  width: 1px;
  height: 10px;
  background: #000;
}
.btn {
  font-family: inherit;
  font-size: 12px;
  color: #111;
  height: 22px;
  padding: 0;
  flex: none;
  border: 1px solid #555;
  border-radius: 4px;
  background: linear-gradient(#fbfbfb, #d8d8d8 50%, #bdbdbd);
}
.btn-wide {
  width: 269px;
}
.btn[disabled] {
  color: #a2a2a2;
  border-color: #b4b4b4;
  background: linear-gradient(#f5f5f5, #dddddd 50%, #ececec);
}
.dlg-sep {
  height: 2px;
  flex: none;
  margin-left: -1px;
  border-top: 1px solid #b9b9b9;
  border-bottom: 1px solid #fafafa;
  box-sizing: border-box;
}
.group-label {
  align-self: flex-start;
}
.chk {
  height: 16px;
  flex: none;
  display: flex;
  align-items: center;
  gap: 2px;
  line-height: 16px;
}
.box {
  width: 16px;
  height: 16px;
  flex: none;
  box-sizing: border-box;
  border: 1px solid #6f6f6f;
  border-radius: 3px;
  background: linear-gradient(#f5f5f5, #c2c2c2);
}
.box.on {
  border-color: #45698a;
  background: linear-gradient(#a5d3ef, #d9edfb);
}
.box svg {
  display: block;
  width: 14px;
  height: 14px;
}
.dlg-foot {
  margin-top: 4px;
  padding-right: 6px;
  display: flex;
  justify-content: flex-end;
  gap: 7px;
}
.foot {
  width: 52px;
  height: 18px;
  line-height: 16px;
}
.foot.ok {
  border-color: #3f7f3f;
  background: linear-gradient(#d8f0c8, #9cdc78 55%, #5dbb4b);
}
.red-arrow {
  position: absolute;
  inset: 0;
  width: 1170px;
  height: 651px;
  pointer-events: none;
}

/* ime bar */
.ime {
  position: absolute;
  left: 736px;
  top: 6px;
  width: 157px;
  height: 30px;
  display: flex;
  align-items: center;
  box-sizing: border-box;
  background: #fff;
  border: 1px solid #c4d8f0;
}
.ime-logo {
  position: absolute;
  left: -15px;
  top: -6px;
  width: 35px;
  height: 35px;
  border-radius: 50%;
  background: #2a7bf0;
  color: #fff;
  font-family: "Liberation Sans", sans-serif;
  font-size: 22px;
  line-height: 33px;
  letter-spacing: -1px;
  text-align: center;
}
.ime-zh {
  margin-left: 30px;
  width: 16px;
  font-size: 15px;
  font-weight: 700;
  color: #3a7fd5;
}
.ime-punct {
  margin-left: 11px;
  width: 16px;
  font-family: "Liberation Sans", sans-serif;
  font-size: 18px;
  font-weight: 700;
  line-height: 18px;
  color: #3a7fd5;
}
.ime-ic {
  width: 17px;
  height: 16px;
  margin-left: 9px;
  flex: none;
}
.ime-grid {
  margin-left: 10px;
}
</style>
